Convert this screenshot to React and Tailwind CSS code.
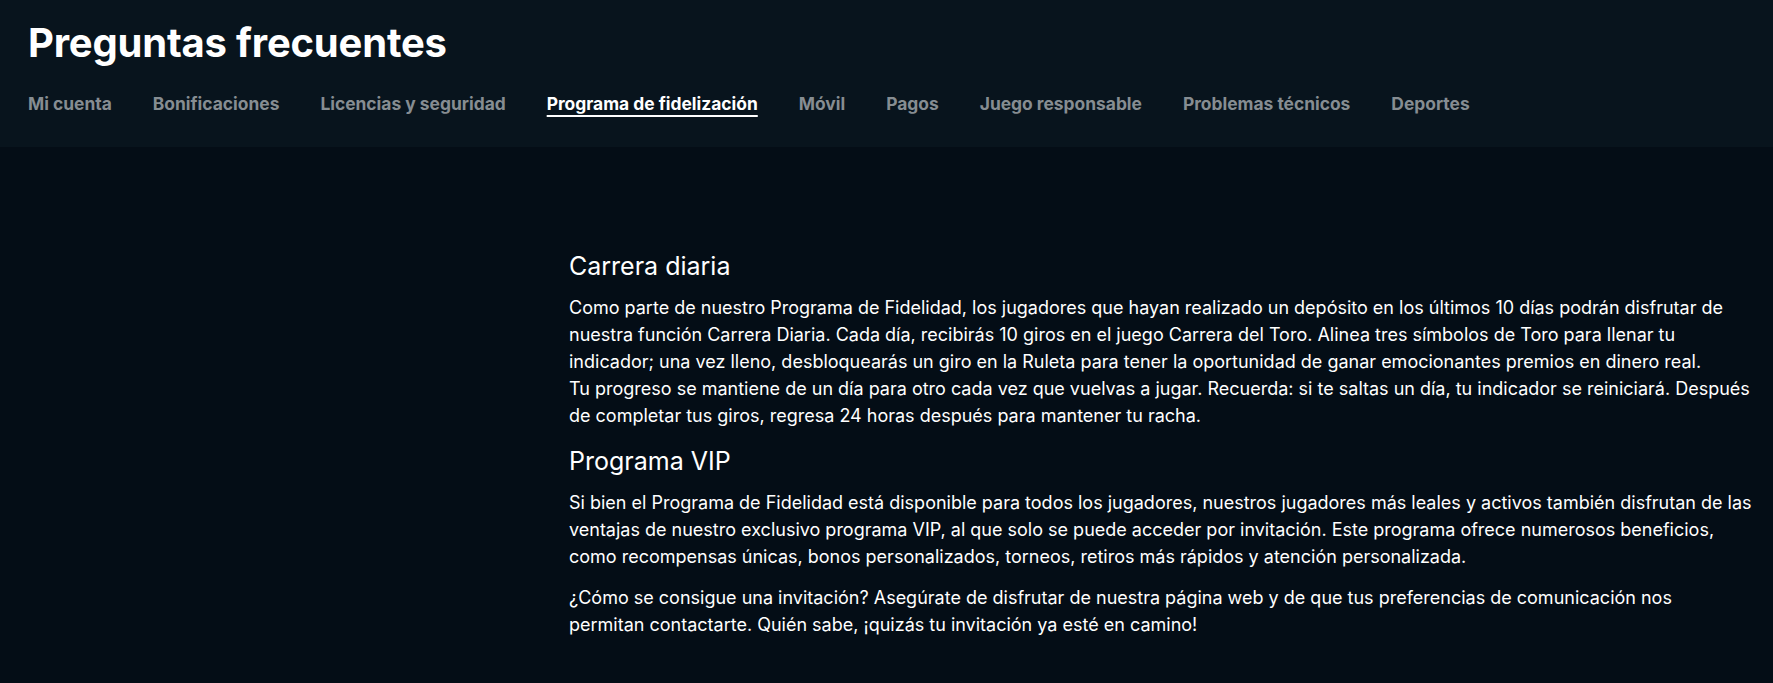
import React from 'react';

const tabs = [
  'Mi cuenta',
  'Bonificaciones',
  'Licencias y seguridad',
  'Programa de fidelización',
  'Móvil',
  'Pagos',
  'Juego responsable',
  'Problemas técnicos',
  'Deportes',
];

const active = 'Programa de fidelización';

export default function App() {
  return (
    <div className="min-h-[683px] bg-[#040d16] font-['Inter',sans-serif] text-white">
      {/* Header */}
      <header className="h-[147px] bg-[#08141d] px-[28px] pt-[19px]">
        <h1 className="text-[40px] font-bold leading-[48px] tracking-[-0.2px]">Preguntas frecuentes</h1>
        <nav className="mt-[25px] flex gap-[41px]">
          {tabs.map((tab) => (
            <a
              key={tab}
              href="#"
              className={
                tab === active
                  ? 'text-[17.4px] font-bold leading-[24px] text-white underline decoration-2 underline-offset-[5px]'
                  : 'text-[17.4px] font-bold leading-[24px] text-[#868d92]'
              }
            >
              {tab}
            </a>
          ))}
        </nav>
      </header>

      {/* Body */}
      <div className="flex">
        <aside className="w-[518px] shrink-0" />
        <main className="w-[1238px] pl-[51px] pt-[101px] pb-[30px] text-[18px] leading-[27px]">
          <h2 className="mb-[10px] text-[25px] font-normal leading-[36px]">Carrera diaria</h2>
          <p className="mb-[14px]">
            Como parte de nuestro Programa de Fidelidad, los jugadores que hayan realizado un depósito en los últimos 10 días podrán disfrutar de nuestra función Carrera Diaria. Cada día, recibirás 10 giros en el juego Carrera del Toro. Alinea tres símbolos de Toro para llenar tu indicador; una vez lleno, desbloquearás un giro en la Ruleta para tener la oportunidad de ganar emocionantes premios en dinero real.
            <br />
            Tu progreso se mantiene de un día para otro cada vez que vuelvas a jugar. Recuerda: si te saltas un día, tu indicador se reiniciará. Después de completar tus giros, regresa 24 horas después para mantener tu racha.
          </p>
          <h2 className="mb-[10px] text-[25px] font-normal leading-[36px]">Programa VIP</h2>
          <p className="mb-[14px]">
            Si bien el Programa de Fidelidad está disponible para todos los jugadores, nuestros jugadores más leales y activos también disfrutan de las ventajas de nuestro exclusivo programa VIP, al que solo se puede acceder por invitación. Este programa ofrece numerosos beneficios, como recompensas únicas, bonos personalizados, torneos, retiros más rápidos y atención personalizada.
          </p>
          <p className="mb-[14px] max-w-[1150px]">
            ¿Cómo se consigue una invitación? Asegúrate de disfrutar de nuestra página web y de que tus preferencias de comunicación nos permitan contactarte. Quién sabe, ¡quizás tu invitación ya esté en camino!
          </p>
        </main>
      </div>
    </div>
  );
}
